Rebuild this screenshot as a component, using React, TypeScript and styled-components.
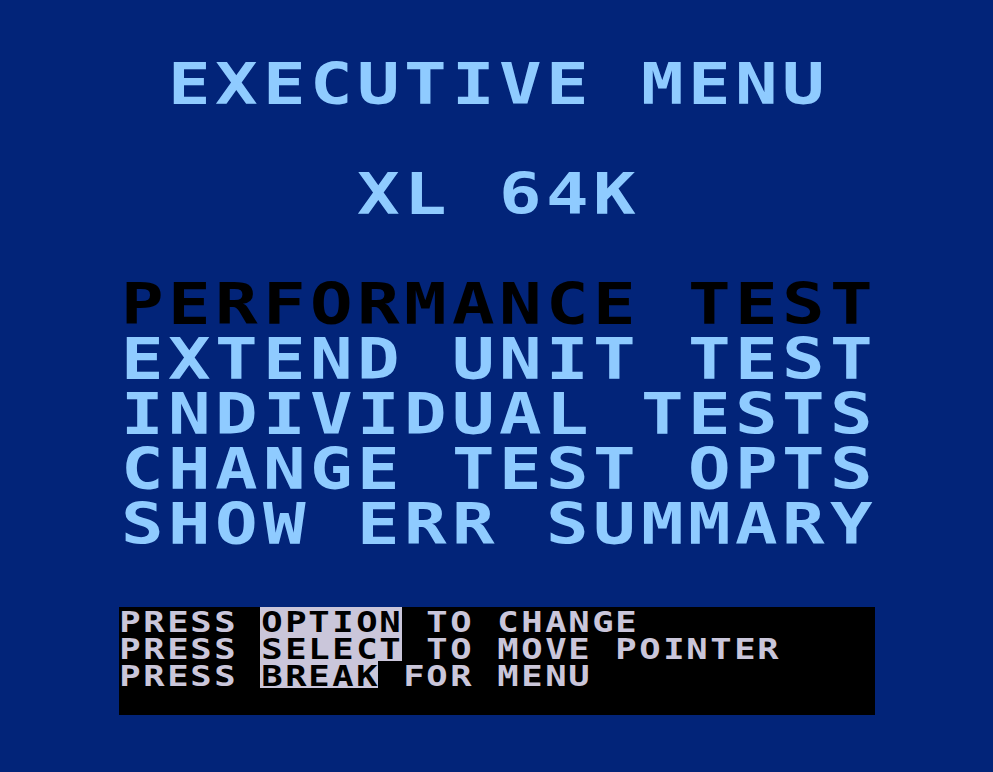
import React from "react";
import styled, { createGlobalStyle } from "styled-components";

// character grid of the 16-column playfield (big) and the 32-column prompt (small)
const BIG_W = 47.25;
const BIG_H = 55;
const SMALL_W = 23.625;
const SMALL_H = 27;

const SCREEN_BLUE = "#022479";
const LIGHT_BLUE = "#8fcbff";
const PALE_GREY = "#cac6da";

type Part = { text: string; inverse?: boolean };

const GlobalStyle = createGlobalStyle`
  html, body {
    margin: 0;
    padding: 0;
    background: ${SCREEN_BLUE};
  }
  body {
    font-family: "DejaVu Sans Mono", "Liberation Mono", monospace;
  }
`;

const Screen = styled.div`
  width: 993px;
  height: 772px;
  box-sizing: border-box;
  padding-top: ${BIG_H}px;
  background: ${SCREEN_BLUE};
  display: flex;
  flex-direction: column;
  align-items: center;
  overflow: hidden;
`;

const Playfield = styled.div`
  width: ${BIG_W * 16}px;
  display: flex;
  flex-direction: column;
`;

const Header = styled.header`
  display: flex;
  flex-direction: column;
  gap: ${BIG_H}px;
  margin-bottom: ${BIG_H}px;
`;

const Menu = styled.nav`
  display: flex;
  flex-direction: column;
`;

const PromptBox = styled.div`
  margin-top: 57px;
  height: ${SMALL_H * 4}px;
  background: #000;
  color: ${PALE_GREY};
`;

// font size is picked so the glyph box fits the row exactly; the glyph is
// then stretched to the size of the 8x8 bitmap characters
const Row = styled.div<{ $big?: boolean; $indent?: number; $tone?: string }>`
  display: flex;
  height: ${(p) => (p.$big ? BIG_H : SMALL_H)}px;
  padding-left: ${(p) => (p.$indent ?? 0) * (p.$big ? BIG_W : SMALL_W)}px;
  font-size: ${(p) => (p.$big ? 47.2 : 23.2)}px;
  line-height: ${(p) => (p.$big ? BIG_H : SMALL_H)}px;
  font-weight: 700;
  color: ${(p) => p.$tone ?? "inherit"};
`;

const Run = styled.span<{ $inverse?: boolean }>`
  display: flex;
  background: ${(p) => (p.$inverse ? PALE_GREY : "transparent")};
  color: ${(p) => (p.$inverse ? "#000" : "inherit")};
`;

const Cell = styled.span<{ $big?: boolean }>`
  display: flex;
  justify-content: center;
  flex: none;
  width: ${(p) => (p.$big ? BIG_W : SMALL_W)}px;
  height: 100%;
`;

const Glyph = styled.span<{ $big?: boolean }>`
  display: inline-block;
  white-space: pre;
  transform: ${(p) =>
    p.$big ? "translateY(1.2px) scale(1.5, 1.2)" : "translateY(0.7px) scale(1.53, 1.215)"};
`;

const Line = ({
  parts,
  big,
  indent,
  tone,
}: {
  parts: Part[];
  big?: boolean;
  indent?: number;
  tone?: string;
}) => (
  <Row $big={big} $indent={indent} $tone={tone}>
    {parts.map((part, i) => (
      <Run key={i} $inverse={part.inverse}>
        {part.text.split("").map((ch, j) => (
          <Cell key={j} $big={big}>
            {ch !== " " && <Glyph $big={big}>{ch}</Glyph>}
          </Cell>
        ))}
      </Run>
    ))}
  </Row>
);

const menuItems = [
  "PERFORMANCE TEST",
  "EXTEND UNIT TEST",
  "INDIVIDUAL TESTS",
  "CHANGE TEST OPTS",
  "SHOW ERR SUMMARY",
];

const prompts: Part[][] = [
  [{ text: "PRESS " }, { text: "OPTION", inverse: true }, { text: " TO CHANGE" }],
  [{ text: "PRESS " }, { text: "SELECT", inverse: true }, { text: " TO MOVE POINTER" }],
  [{ text: "PRESS " }, { text: "BREAK", inverse: true }, { text: " FOR MENU" }],
];

const App = () => {
  const selected = 0;

  return (
    <>
      <GlobalStyle />
      <Screen>
        <Playfield>
          <Header>
            <Line big indent={1} tone={LIGHT_BLUE} parts={[{ text: "EXECUTIVE MENU" }]} />
            <Line big indent={5} tone={LIGHT_BLUE} parts={[{ text: "XL 64K" }]} />
          </Header>

          <Menu>
            {menuItems.map((item, i) => (
              <Line
                key={item}
                big
                tone={i === selected ? "#000" : LIGHT_BLUE}
                parts={[{ text: item }]}
              />
            ))}
          </Menu>

          <PromptBox>
            {prompts.map((parts, i) => (
              <Line key={i} parts={parts} />
            ))}
          </PromptBox>
        </Playfield>
      </Screen>
    </>
  );
};

export default App;
